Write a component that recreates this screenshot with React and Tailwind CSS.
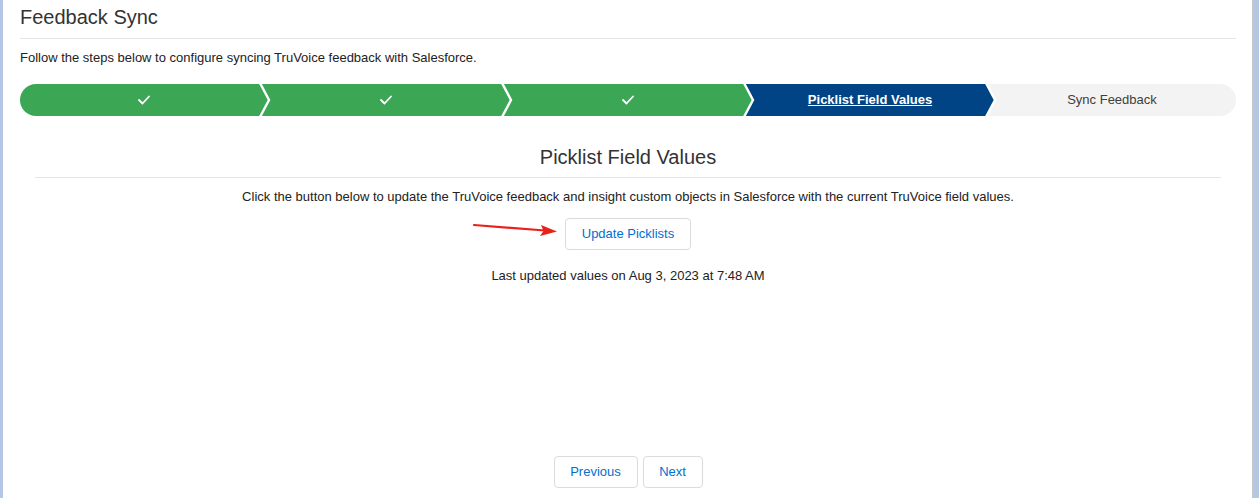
import React from "react";

const steps = [
  { label: null, state: "done" },
  { label: null, state: "done" },
  { label: null, state: "done" },
  { label: "Picklist Field Values", state: "current" },
  { label: "Sync Feedback", state: "todo" },
];

const fill = {
  done: "#3ba755",
  current: "#014486",
  todo: "#f3f3f3",
};

const Check = () => (
  <svg width="14" height="12" viewBox="0 0 14 12" fill="none">
    <polyline points="2,6 5.5,9.5 12,2.5" stroke="white" strokeWidth="1.8" strokeLinecap="round" strokeLinejoin="round" />
  </svg>
);

const Step = ({ step, last, first }) => {
  const bg = {
    done: "bg-[#3ba755]",
    current: "bg-[#014486]",
    todo: "bg-[#f3f3f3]",
  }[step.state];
  return (
    <div className={`relative h-full flex items-center justify-center ${bg} ${last ? "flex-1 rounded-r-full" : "w-[242px] flex-none pl-[6px]"} ${first ? "rounded-l-full" : ""}`}>
      {step.state === "done" && <Check />}
      {step.state === "current" && (
        <span className="text-[13px] font-bold text-white underline">{step.label}</span>
      )}
      {step.state === "todo" && (
        <span className="text-[13px] text-[#3e3e3c]">{step.label}</span>
      )}
      {!last && (
        <svg className="absolute top-0 left-[calc(100%-3px)] z-10" width="14" height="32" viewBox="0 0 14 32">
          <polygon points="0,0 1,0 10,16 1,32 0,32" fill={fill[step.state]} />
          <polyline points="1,-1 10,16 1,33" fill="none" stroke="white" strokeWidth="2.4" />
        </svg>
      )}
    </div>
  );
};

const App = () => {
  return (
    <div className="flex h-[498px] w-full overflow-hidden bg-white font-['Liberation_Sans',Arial,sans-serif] text-[#3e3e3c]">
      <div className="w-[3px] bg-[#b4c8e6]" />
      <main className="flex-1 flex flex-col pl-[17px] pr-4">
        {/* Header */}
        <div className="pt-[6px] pb-[9px] border-b border-[#e5e5e5]">
          <h1 className="text-[20px] leading-[23px] text-[#333]">Feedback Sync</h1>
        </div>
        <p className="mt-[11px] text-[13px] leading-[16px] text-[#222]">
          Follow the steps below to configure syncing TruVoice feedback with Salesforce.
        </p>

        {/* Path */}
        <div className="mt-[18px] flex h-8 w-full">
          {steps.map((s, i) => (
            <Step key={i} step={s} first={i === 0} last={i === steps.length - 1} />
          ))}
        </div>

        {/* Content */}
        <div className="px-[15px] mt-[29px]">
          <h2 className="text-center text-[20px] leading-[24px] text-[#333] pb-[8px] border-b border-[#e5e5e5]">
            Picklist Field Values
          </h2>
          <p className="mt-[11px] text-center text-[13px] leading-[16px] text-[#222]">
            Click the button below to update the TruVoice feedback and insight custom objects in Salesforce with the current TruVoice field values.
          </p>
          <div className="mt-[13px] flex justify-center">
            <div className="relative">
              <button className="h-[32px] px-4 rounded border border-[#dddbda] bg-white text-[13px] text-[#0070d2]">
                Update Picklists
              </button>
              <svg className="absolute top-[3px] right-[calc(100%+6px)]" width="86" height="16" viewBox="0 0 86 16">
                <line x1="1" y1="4" x2="72" y2="9.5" stroke="#e8221b" strokeWidth="2.2" strokeLinecap="round" />
                <polygon points="84,10.5 68,4 70.5,10 67,15" fill="#e8221b" />
              </svg>
            </div>
          </div>
          <p className="mt-[18px] text-center text-[13px] leading-[16px] text-[#222]">
            Last updated values on Aug 3, 2023 at 7:48 AM
          </p>
        </div>

        {/* Footer */}
        <div className="mt-auto mb-[10px] flex justify-center gap-[5px]">
          <button className="h-[32px] w-[84px] rounded border border-[#dddbda] bg-white text-[13px] text-[#0070d2]">
            Previous
          </button>
          <button className="h-[32px] w-[60px] rounded border border-[#dddbda] bg-white text-[13px] text-[#0070d2]">
            Next
          </button>
        </div>
      </main>
      <div className="w-px bg-[#c8c8c8]" />
      <div className="w-[6px] bg-[#b4c8e6]" />
    </div>
  );
};

export default App;
